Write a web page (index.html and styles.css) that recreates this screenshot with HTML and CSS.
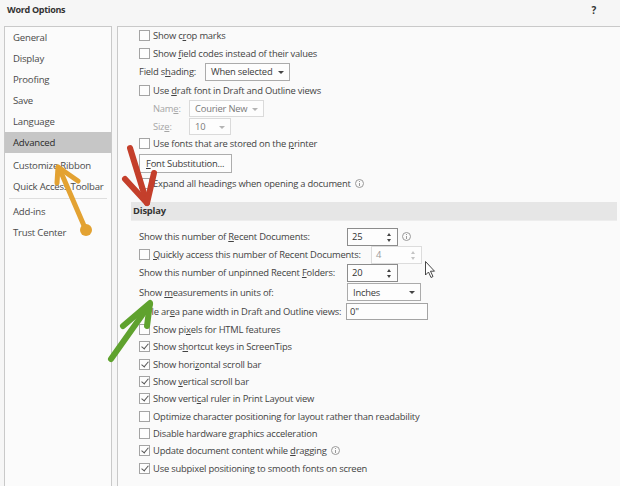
FILE: index.html
```html
<!DOCTYPE html>
<html lang="en">
<head>
    <meta charset="UTF-8">
    <title>Word Options</title>
    <link rel="stylesheet" href="styles.css">
</head>
<body>
    <div class="wo-dialog">
        <div class="wo-titlebar">
            <span class="wo-title">Word Options</span>
            <span class="wo-help">?</span>
        </div>

        <div class="wo-body">
            <nav class="wo-sidebar">
                <div class="wo-nav-item">General</div>
                <div class="wo-nav-item">Display</div>
                <div class="wo-nav-item">Proofing</div>
                <div class="wo-nav-item">Save</div>
                <div class="wo-nav-item">Language</div>
                <div class="wo-nav-item active">Advanced</div>
                <div class="wo-nav-item gap">Customize Ribbon</div>
                <div class="wo-nav-item">Quick Access Toolbar</div>
                <div class="wo-nav-sep"></div>
                <div class="wo-nav-item">Add-ins</div>
                <div class="wo-nav-item">Trust Center</div>
            </nav>

            <div class="wo-content">
                <!-- tail of the "Show document content" group -->
                <div class="wo-row h17"><span class="cb"></span><span>Show c<u>r</u>op marks</span></div>
                <div class="wo-row h17"><span class="cb"></span><span>Show <u>f</u>ield codes instead of their values</span></div>
                <div class="wo-row h20">
                    <span class="lbl w66">Field s<u>h</u>ading:</span>
                    <span class="wo-select w85">When selected<i class="caret"></i></span>
                </div>
                <div class="wo-row h17"><span class="cb"></span><span>Use <u>d</u>raft font in Draft and Outline views</span></div>
                <div class="wo-row h18 sub">
                    <span class="lbl w36 dim">Nam<u>e</u>:</span>
                    <span class="wo-select w75 off">Courier New<i class="caret"></i></span>
                </div>
                <div class="wo-row h18 sub">
                    <span class="lbl w36 dim">Siz<u>e</u>:</span>
                    <span class="wo-select w42 off">10<i class="caret"></i></span>
                </div>
                <div class="wo-row h17"><span class="cb"></span><span>Use fonts that are stored on the <u>p</u>rinter</span></div>
                <div class="wo-row h21"><button class="wo-button"><u>F</u>ont Substitution...</button></div>
                <div class="wo-row h19"><span class="cb"></span><span>Expand all headings when opening a document</span><i class="info"></i></div>

                <div class="wo-section">Display</div>

                <div class="wo-row h18 first">
                    <span class="lbl w208">Show this number of <u>R</u>ecent Documents:</span>
                    <span class="wo-spin">25<i class="arrows"></i></span>
                    <i class="info"></i>
                </div>
                <div class="wo-row h18">
                    <span class="cb"></span>
                    <span class="lbl w218"><u>Q</u>uickly access this number of Recent Documents:</span>
                    <span class="wo-spin off">4<i class="arrows"></i></span>
                </div>
                <div class="wo-row h18">
                    <span class="lbl w208">Show this number of unpinned Recent <u>F</u>olders:</span>
                    <span class="wo-spin">20<i class="arrows"></i></span>
                </div>
                <div class="wo-row h21">
                    <span class="lbl w208">Show <u>m</u>easurements in units of:</span>
                    <span class="wo-select w74">Inches<i class="caret"></i></span>
                </div>
                <div class="wo-row h18">
                    <span class="lbl w207">Style ar<u>e</u>a pane width in Draft and Outline views:</span>
                    <span class="wo-text">0"</span>
                </div>
                <div class="wo-row h17"><span class="cb"></span><span>Show pi<u>x</u>els for HTML features</span></div>
                <div class="wo-row h17"><span class="cb on"></span><span>Show s<u>h</u>ortcut keys in ScreenTips</span></div>
                <div class="wo-row h17"><span class="cb on"></span><span>Show hori<u>z</u>ontal scroll bar</span></div>
                <div class="wo-row h17"><span class="cb on"></span><span>Show <u>v</u>ertical scroll bar</span></div>
                <div class="wo-row h17"><span class="cb on"></span><span>Show verti<u>c</u>al ruler in Print Layout view</span></div>
                <div class="wo-row h17"><span class="cb"></span><span>Optimize character positioning for layout rather than readability</span></div>
                <div class="wo-row h17"><span class="cb"></span><span>Disable hardware <u>g</u>raphics acceleration</span></div>
                <div class="wo-row h17"><span class="cb on"></span><span>Update document content while <u>d</u>ragging</span><i class="info"></i></div>
                <div class="wo-row h17"><span class="cb on"></span><span>Use subpixel positioning to smooth fonts on screen</span></div>
            </div>
        </div>

        <!-- hand drawn pointers on top of the dialog -->
        <svg class="wo-marks" width="620" height="486" viewBox="0 0 620 486">
            <g fill="none" stroke-linecap="round" stroke-linejoin="round">
                <g stroke="#e3a232" stroke-width="5">
                    <path d="M85 228 L60 170"/>
                    <path d="M58 167 L78 181 M58 167 L57 183"/>
                </g>
                <circle cx="86" cy="230" r="6" fill="#e3a232"/>
                <g stroke="#c43f2b" stroke-width="6">
                    <path d="M130 148 L147 203"/>
                    <path d="M125 179 L147 203 L154 173"/>
                </g>
                <g stroke="#5fa22e" stroke-width="6">
                    <path d="M111 359 L150 304"/>
                    <path d="M123 326 L150 303 L147 326"/>
                </g>
            </g>
            <path class="cursor" d="M425.5 261.5 L425.5 275 L428.5 272 L431 277.5 L433 276.5 L430.5 271.2 L434.5 271.2 Z"/>
        </svg>
    </div>
</body>
</html>
```

FILE: styles.css
```css
/* Word Options dialog, Advanced page */
body {
    margin: 0;
    background: #f6f6f6;
}

.wo-dialog,
.wo-dialog * {
    box-sizing: border-box;
    font-family: "Open Sans", "Noto Sans", sans-serif;
}

.wo-dialog {
    position: relative;
    width: 620px;
    height: 486px;
    overflow: hidden;
    background: #f6f6f6;
    color: #434343;
    font-size: 9.4px;
    letter-spacing: -0.2px;
}

.wo-titlebar {
    height: 26px;
    display: flex;
    align-items: flex-start;
    justify-content: space-between;
    padding: 3px 24px 0 7px;
    font-size: 9px;
    font-weight: 700;
    letter-spacing: -0.3px;
    color: #333;
}

.wo-help {
    font-size: 10px;
}

.wo-body {
    display: flex;
    gap: 5px;
    padding-left: 4px;
    height: 460px;
}

/* left category list */
.wo-sidebar {
    width: 108px;
    flex-shrink: 0;
    border: 1px solid #c9c9c9;
    border-bottom: none;
    background: #fbfbfb;
}

.wo-nav-item {
    height: 21px;
    display: flex;
    align-items: center;
    padding-left: 8px;
    font-size: 9.6px;
    color: #4a4a4a;
}

.wo-nav-item.active {
    background: #c6c6c6;
    color: #2a2a2a;
}

.wo-nav-item.gap {
    margin-top: 2px;
}

.wo-nav-sep {
    height: 1px;
    margin: 1px 4px 2px;
    background: #dedede;
}

/* right settings panel */
.wo-content {
    flex: 1;
    border-top: 1px solid #c9c9c9;
    border-left: 1px solid #c9c9c9;
    background: #fafafa;
    display: flex;
    flex-direction: column;
}

.wo-row {
    display: flex;
    align-items: center;
    padding-left: 21px;
    flex-shrink: 0;
    white-space: nowrap;
}

.wo-row.sub {
    padding-left: 35px;
}

.wo-row.first {
    margin-top: 7px;
}

.h17 { height: 17.4px; }
.h18 { height: 18px; }
.h19 { height: 19px; }
.h20 { height: 20px; }
.h21 { height: 21px; }

.lbl { flex-shrink: 0; }
.w36 { width: 36px; }
.w66 { width: 66px; }
.w207 { width: 207px; }
.w208 { width: 208px; }
.w218 { width: 218px; }

.dim { color: #a6a6a6; }

u {
    text-decoration-thickness: 1px;
    text-underline-offset: 1px;
}

.wo-section {
    margin: 9px 3px 0 13px;
    height: 19px;
    display: flex;
    align-items: center;
    padding-left: 2px;
    background: #e6e6e6;
    border-bottom: 1px solid #ededed;
    font-weight: 700;
    color: #333;
}

/* checkbox */
.cb {
    width: 11px;
    height: 11px;
    margin-right: 3px;
    flex-shrink: 0;
    border: 1px solid #a4a4a4;
    background: #fdfdfd;
    position: relative;
}

.cb.on::after {
    content: "";
    position: absolute;
    left: 3px;
    top: 0px;
    width: 3px;
    height: 6px;
    border-right: 1.2px solid #555;
    border-bottom: 1.2px solid #555;
    transform: rotate(40deg);
}

.info {
    width: 9px;
    height: 9px;
    margin-left: 4px;
    border: 1px solid #9a9a9a;
    border-radius: 50%;
    position: relative;
    flex-shrink: 0;
}

.info::before {
    content: "";
    position: absolute;
    left: 3px;
    top: 3px;
    width: 1px;
    height: 3px;
    background: #9a9a9a;
}

.info::after {
    content: "";
    position: absolute;
    left: 3px;
    top: 1px;
    width: 1px;
    height: 1px;
    background: #9a9a9a;
}

/* drop down */
.wo-select {
    position: relative;
    height: 18px;
    display: flex;
    align-items: center;
    padding-left: 5px;
    border: 1px solid #ababab;
    background: #fdfdfd;
    color: #3c3c3c;
}

.w42 { width: 42px; }
.w74 { width: 74px; }
.w75 { width: 75px; }
.w85 { width: 85px; }

.wo-select.off {
    height: 17px;
    border-color: #dadada;
    color: #7a7a7a;
}

.caret {
    position: absolute;
    right: 5px;
    top: 7px;
    border-left: 3px solid transparent;
    border-right: 3px solid transparent;
    border-top: 3px solid #444;
}

.wo-select.off .caret {
    border-top-color: #b4b4b4;
}

/* number spinner */
.wo-spin {
    position: relative;
    width: 51px;
    height: 18px;
    display: flex;
    align-items: center;
    padding-left: 4px;
    border: 1px solid #8c8c8c;
    background: #fdfdfd;
    color: #333;
}

.wo-spin.off {
    border-color: #dcdcdc;
    color: #9a9a9a;
}

.arrows {
    position: absolute;
    right: 5px;
    top: 3px;
    width: 5px;
    height: 10px;
}

.arrows::before,
.arrows::after {
    content: "";
    position: absolute;
    left: 0;
    border-left: 2.5px solid transparent;
    border-right: 2.5px solid transparent;
}

.arrows::before {
    top: 1px;
    border-bottom: 3px solid #444;
}

.arrows::after {
    bottom: 0;
    border-top: 3px solid #444;
}

.wo-spin.off .arrows::before { border-bottom-color: #c4c4c4; }
.wo-spin.off .arrows::after { border-top-color: #c4c4c4; }

.wo-text {
    width: 82px;
    height: 17px;
    display: flex;
    align-items: center;
    padding-left: 3px;
    border: 1px solid #a4a4a4;
    background: #fdfdfd;
    color: #333;
}

.wo-button {
    width: 93px;
    height: 19px;
    padding: 0 0 0 6px;
    text-align: left;
    border: 1px solid #adadad;
    background: #fdfdfd;
    color: #3a3a3a;
    font-size: 9.4px;
    letter-spacing: -0.2px;
}

/* annotation layer */
.wo-marks {
    position: absolute;
    left: 0;
    top: 0;
    pointer-events: none;
}

.cursor {
    fill: #fff;
    stroke: #333;
    stroke-width: 0.9;
}
```
